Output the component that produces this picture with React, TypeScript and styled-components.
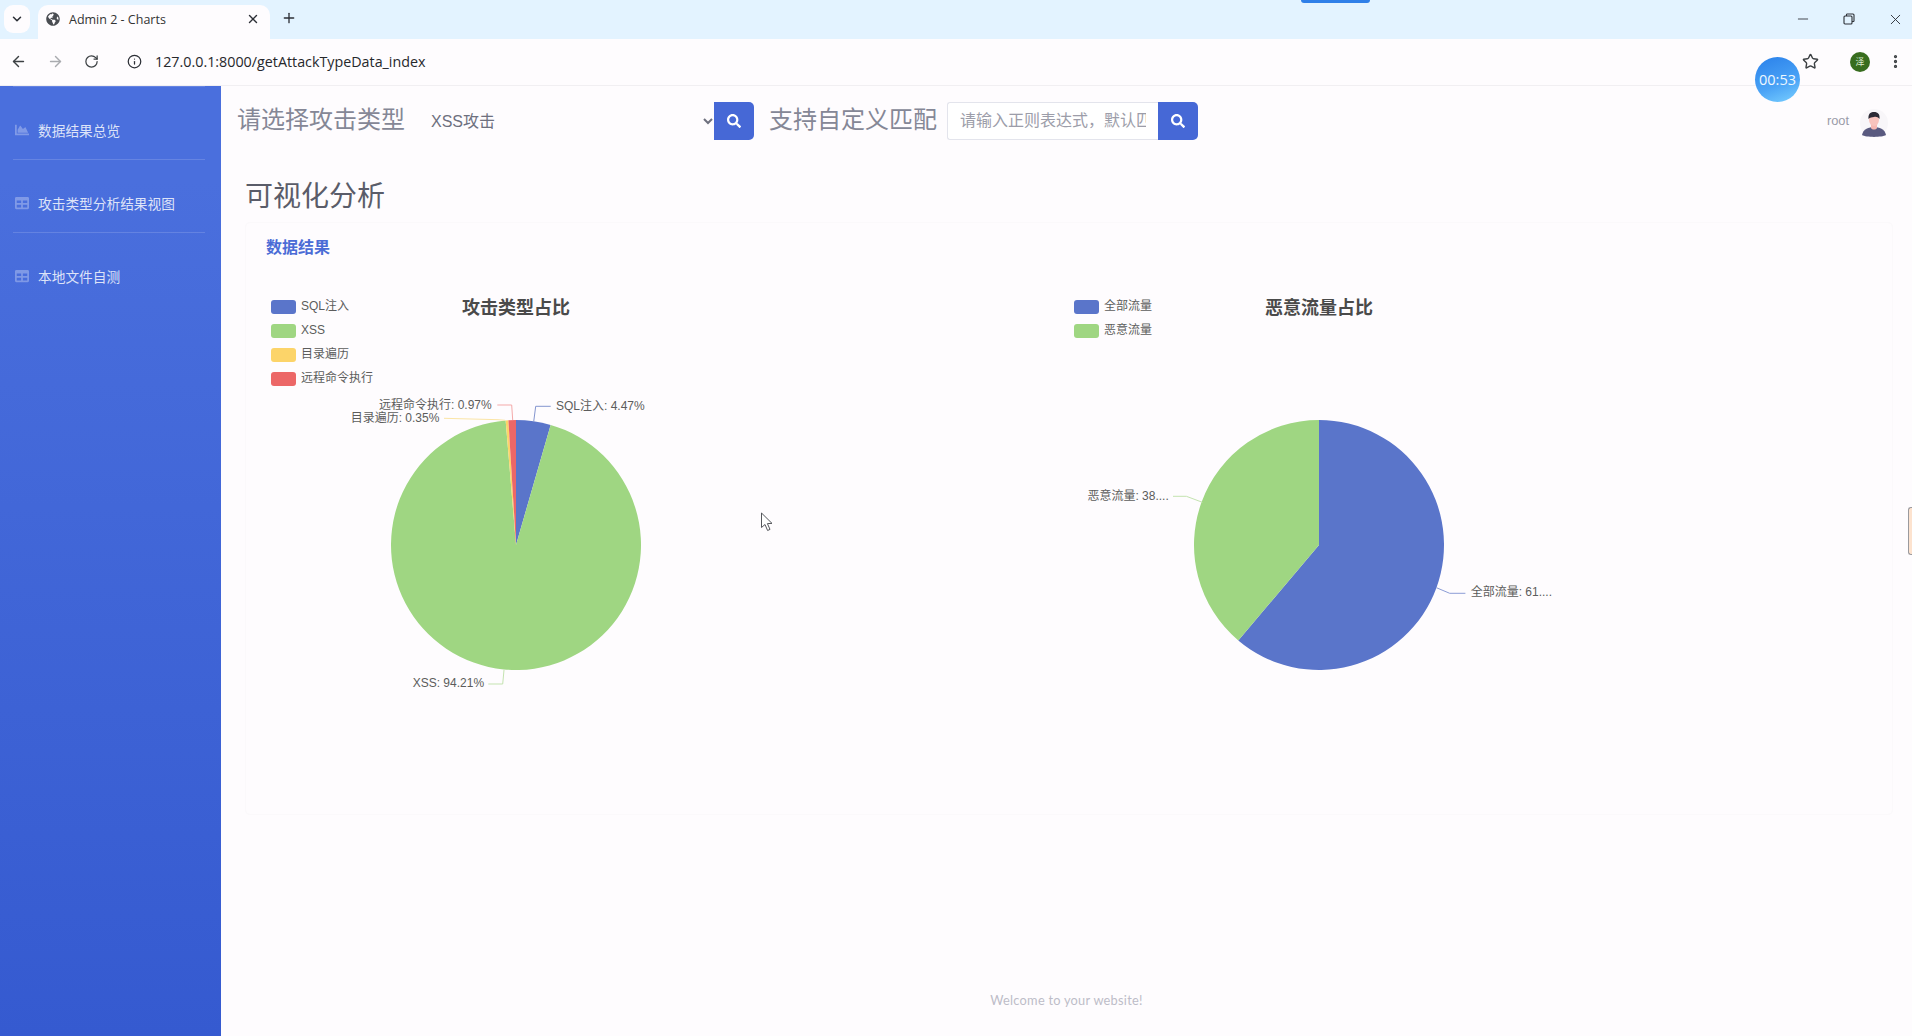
import React from 'react';
import styled, { createGlobalStyle } from 'styled-components';
import { ArrowLeft, ArrowRight, ChevronDown, EllipsisVertical, Info, Minus, Plus, RotateCw, Star, X } from 'lucide-react';
import { FaChartArea, FaGlobeAmericas, FaSearch, FaTable } from 'react-icons/fa';

const UI_FONT = '"Liberation Sans", "Noto Sans CJK SC", sans-serif';
const CHROME_FONT = '"Open Sans", "Noto Sans CJK SC", sans-serif';
const PAGE_BG = '#fefcfe';

const GlobalStyle = createGlobalStyle`
  html, body {
    margin: 0;
    padding: 0;
    background: ${PAGE_BG};
    overflow: hidden;
  }
  * { box-sizing: border-box; }
`;

const Screen = styled.div`
  position: relative;
  width: 1912px;
  height: 1036px;
  display: flex;
  flex-direction: column;
  overflow: hidden;
  font-family: ${UI_FONT};
  background: ${PAGE_BG};
`;

/* browser chrome */
const TabStrip = styled.div`
  height: 39px;
  flex: none;
  display: flex;
  align-items: flex-end;
  background: #e3f3ff;
  padding-left: 4px;
  color: #2c2f36;
`;

const TabMenu = styled.div`
  width: 26px;
  height: 28px;
  margin-bottom: 6px;
  border-radius: 9px;
  background: ${PAGE_BG};
  display: flex;
  align-items: center;
  justify-content: center;
`;

const Tab = styled.div`
  width: 232px;
  height: 34px;
  margin-left: 8px;
  padding: 0 10px 6px 8px;
  border-radius: 10px 10px 0 0;
  background: ${PAGE_BG};
  display: flex;
  align-items: center;
  gap: 9px;
`;

const TabTitle = styled.span`
  flex: 1;
  font: 12.5px ${CHROME_FONT};
  color: #333;
`;

const NewTab = styled.div`
  margin: 0 0 13px 11px;
  display: flex;
`;

const WindowButtons = styled.div`
  margin-left: auto;
  align-self: flex-start;
  height: 38px;
  display: flex;
  align-items: center;
  gap: 32px;
  padding-right: 8px;
`;

const AddressBar = styled.div`
  height: 47px;
  flex: none;
  display: flex;
  align-items: center;
  background: ${PAGE_BG};
  border-bottom: 1px solid #f1eff2;
  padding: 0 8px 1px 10px;
  color: #3c4043;
`;

const NavIcons = styled.div`
  display: flex;
  align-items: center;
  gap: 20px;
`;

const Url = styled.div`
  display: flex;
  align-items: center;
  gap: 13px;
  margin-left: 28px;
  font: 14.3px ${CHROME_FONT};
  color: #26282c;
`;

const BarActions = styled.div`
  margin-left: auto;
  display: flex;
  align-items: center;
`;

const Profile = styled.div`
  width: 20px;
  height: 20px;
  margin: 0 17px 0 31px;
  border-radius: 50%;
  background: #386d1f;
  color: #dcebd2;
  font: 9px "Noto Sans CJK SC", sans-serif;
  display: flex;
  align-items: center;
  justify-content: center;
`;

/* page */
const Body = styled.div`
  flex: 1;
  min-height: 0;
  display: flex;
`;

const Sidebar = styled.nav`
  width: 221px;
  flex: none;
  background: linear-gradient(180deg, #4a6fdd 10%, #355ad0 100%);
`;

const NavItem = styled.a`
  height: 59px;
  padding-left: 15px;
  display: flex;
  align-items: center;
  gap: 9px;
  color: rgba(255, 255, 255, 0.82);
  font-size: 13.7px;
  svg { color: rgba(255, 255, 255, 0.3); flex: none; }
`;

const Divider = styled.hr`
  margin: 0 16px 13px 13px;
  border: 0;
  border-top: 1px solid rgba(255, 255, 255, 0.15);
`;

const Main = styled.main`
  flex: 1;
  min-width: 0;
  display: flex;
  flex-direction: column;
`;

const Topbar = styled.header`
  height: 68px;
  flex: none;
  padding: 16px 24px 0 16px;
  display: flex;
  align-items: flex-start;
`;

const SearchLabel = styled.span<{ $gap?: number }>`
  height: 38px;
  margin-left: ${p => p.$gap ?? 0}px;
  font-size: 24px;
  line-height: 36px;
  color: #858796;
  white-space: nowrap;
`;

const TypeSelect = styled.select`
  width: 302px;
  height: 38px;
  margin: 0 -2px 0 9px;
  padding: 0 0 0 13px;
  border: 0;
  background: transparent;
  color: #6e707e;
  font: 16px ${UI_FONT};
  outline: none;
`;

const RegexInput = styled.input`
  width: 211px;
  height: 38px;
  margin-left: 10px;
  padding: 6px 12px;
  border: 1px solid #e3e4ec;
  border-right: 0;
  border-radius: 3px 0 0 3px;
  background: #fff;
  font: 16px ${UI_FONT};
  &::placeholder { color: #9c9da9; opacity: 1; }
`;

const SearchButton = styled.button`
  position: relative;
  width: 40px;
  height: 38px;
  padding: 0;
  border: 0;
  border-radius: 0 5px 5px 0;
  background: #4668d6;
  color: #fff;
  display: flex;
  align-items: center;
  justify-content: center;
`;

const UserBox = styled.div`
  margin-left: auto;
  height: 36px;
  display: flex;
  align-items: center;
  gap: 11px;
  font-size: 12.8px;
  color: #9a9ba8;
  svg { margin-top: 6px; }
`;

const Content = styled.div`
  flex: 1;
  padding: 0 19px 0 24px;
`;

const Heading = styled.h1`
  margin: 26px 0 8px;
  font-size: 28px;
  font-weight: 400;
  line-height: 1.2;
  color: #5a5c69;
`;

const Card = styled.section`
  height: 593px;
  border: 1px solid #fbf9fb;
  border-radius: 5px;
  padding: 15px 20px 0;
`;

const CardTitle = styled.h6`
  margin: 0 0 38px;
  font-size: 16px;
  font-weight: 700;
  line-height: 19px;
  color: #4b6cd6;
`;

const ChartRow = styled.div`
  display: flex;
  gap: 303px;
`;

const ChartSvg = styled.svg`
  width: 500px;
  height: 500px;
  flex: none;
`;

const ChartTitle = styled.text`
  font: 700 18px ${UI_FONT};
  fill: #4a4a4a;
  text-anchor: middle;
  dominant-baseline: central;
`;

const ChartText = styled.text`
  font: 12px ${UI_FONT};
  fill: #5c5c5c;
  dominant-baseline: central;
`;

const Footer = styled.footer`
  height: 72px;
  flex: none;
  display: flex;
  align-items: center;
  justify-content: center;
  font: 12.8px Lato, sans-serif;
  letter-spacing: 0.25px;
  color: #bdbcc8;
`;

/* overlays from the screen recorder */
const RecorderPill = styled.div`
  position: absolute;
  left: 1301px;
  top: 0;
  width: 69px;
  height: 3px;
  border-radius: 0 0 4px 4px;
  background: #2f7fe8;
`;

const TimerBubble = styled.div`
  position: absolute;
  left: 1755px;
  top: 57px;
  width: 45px;
  height: 45px;
  border-radius: 50%;
  background: linear-gradient(160deg, #2f86ec 10%, #4aa3f6 60%, #7ad0ff 100%);
  color: #eef8ff;
  font: 14.5px ${CHROME_FONT};
  display: flex;
  align-items: center;
  justify-content: center;
`;

const EdgeHandle = styled.div`
  position: absolute;
  right: 0;
  top: 507px;
  width: 4px;
  height: 48px;
  border: 1px solid #9a9a9e;
  border-right: 0;
  border-radius: 3px 0 0 3px;
  background: #fde3cf;
`;

const Cursor = styled.svg`
  position: absolute;
  left: 760px;
  top: 512px;
`;

type Slice = { name: string; value: number; color: string; lineColor: string; label: string; textX: number; textY: number; line: string };

const attackSlices: Slice[] = [
  { name: 'SQL注入', value: 4.47, color: '#5a75ca', lineColor: '#8495cf', label: 'SQL注入: 4.47%', textX: 290, textY: 111, line: '267.7,126.7 269.7,111.3 284.7,111.3' },
  { name: 'XSS', value: 94.21, color: '#9fd682', lineColor: '#c4e3b0', label: 'XSS: 94.21%', textX: 146.7, textY: 388.3, line: '238,375 236.7,389 222.3,389' },
  { name: '目录遍历', value: 0.35, color: '#fcd469', lineColor: '#fbe5a6', label: '目录遍历: 0.35%', textX: 84.7, textY: 123.3, line: '239,125.3 232,124.7 178,123.3' },
  { name: '远程命令执行', value: 0.97, color: '#ec6767', lineColor: '#f4a9a9', label: '远程命令执行: 0.97%', textX: 113, textY: 110, line: '246.7,125 245.7,110 231.3,110' },
];

const trafficSlices: Slice[] = [
  { name: '全部流量', value: 61.17, color: '#5a75ca', lineColor: '#8c9dd6', label: '全部流量: 61....', textX: 401.7, textY: 297, line: '367.4,292.7 380.7,298.3 396.4,298.3' },
  { name: '恶意流量', value: 38.83, color: '#9fd682', lineColor: '#c4e3b0', label: '恶意流量: 38....', textX: 18.4, textY: 201, line: '104,201.3 117.4,201.3 133.4,207.3' },
];

const slicePath = (from: number, to: number) => {
  const r = 125;
  const point = (pct: number) => {
    const a = (pct / 100) * 2 * Math.PI;
    return `${250 + r * Math.sin(a)} ${250 - r * Math.cos(a)}`;
  };
  return `M250 250 L${point(from)} A${r} ${r} 0 ${to - from > 50 ? 1 : 0} 1 ${point(to)} Z`;
};

const PieChart: React.FC<{ title: string; slices: Slice[] }> = ({ title, slices }) => {
  let total = 0;
  return (
    <ChartSvg viewBox="0 0 500 500">
      <ChartTitle x={250} y={13}>{title}</ChartTitle>
      {slices.map((s, i) => (
        <g key={s.name}>
          <rect x={5} y={5 + i * 24} width={25} height={14} rx={3} fill={s.color} />
          <ChartText x={35} y={11 + i * 24}>{s.name}</ChartText>
        </g>
      ))}
      {slices.map(s => {
        const from = total;
        total += s.value;
        return <path key={s.name} d={slicePath(from, total)} fill={s.color} />;
      })}
      {slices.map(s => (
        <g key={s.name}>
          <polyline points={s.line} fill="none" stroke={s.lineColor} strokeWidth={1} />
          <ChartText x={s.textX} y={s.textY}>{s.label}</ChartText>
        </g>
      ))}
    </ChartSvg>
  );
};

const Avatar = () => (
  <svg width="28" height="28" viewBox="0 0 28 28">
    <circle cx="14" cy="14" r="14" fill="#f8f6f9" />
    <path d="M2 26 C3 20 9 18 14 18 C19 18 25 20 26 26 C22 28.5 6 28.5 2 26Z" fill="#5a5a80" />
    <path d="M11 14 h6 v5 c-1 2 -5 2 -6 0Z" fill="#f7b7b1" />
    <ellipse cx="14" cy="11" rx="5" ry="6" fill="#f9c3bd" />
    <path d="M8.5 10 C8 4 11 3 14 3 C18 3 20 5 19.5 10 C18 8 16 7.5 14 8 C12 8.5 10 8 8.5 10Z" fill="#2c2a35" />
  </svg>
);

const RestoreIcon = () => (
  <svg width="12" height="12" viewBox="0 0 12 12" fill="none" stroke="#2c2f36" strokeWidth="1.1">
    <rect x="1" y="3" width="8" height="8" rx="1" />
    <path d="M3.5 3V1.6C3.5 1.2 3.8 1 4.2 1H10C10.6 1 11 1.4 11 2V7.8C11 8.2 10.8 8.5 10.4 8.5H9" />
  </svg>
);

export default function App() {
  return (
    <Screen>
      <GlobalStyle />
      <TabStrip>
        <TabMenu><ChevronDown size={14} strokeWidth={2.6} /></TabMenu>
        <Tab>
          <FaGlobeAmericas size={14} color="#4a4d52" />
          <TabTitle>Admin 2 - Charts</TabTitle>
          <X size={14} strokeWidth={2.4} />
        </Tab>
        <NewTab><Plus size={16} strokeWidth={2} /></NewTab>
        <WindowButtons>
          <Minus size={16} strokeWidth={1.3} />
          <RestoreIcon />
          <X size={17} strokeWidth={1.3} />
        </WindowButtons>
      </TabStrip>
      <AddressBar>
        <NavIcons>
          <ArrowLeft size={17} strokeWidth={2} />
          <ArrowRight size={17} strokeWidth={2} color="#a9abaf" />
          <RotateCw size={15} strokeWidth={2} />
        </NavIcons>
        <Url>
          <Info size={15} strokeWidth={2} color="#2c2f36" />
          127.0.0.1:8000/getAttackTypeData_index
        </Url>
        <BarActions>
          <Star size={17} strokeWidth={2} />
          <Profile>泽</Profile>
          <EllipsisVertical size={17} strokeWidth={2.6} />
        </BarActions>
      </AddressBar>
      <Body>
        <Sidebar>
          <Divider />
          <NavItem><FaChartArea size={14} />数据结果总览</NavItem>
          <Divider />
          <NavItem><FaTable size={14} />攻击类型分析结果视图</NavItem>
          <Divider />
          <NavItem><FaTable size={14} />本地文件自测</NavItem>
        </Sidebar>
        <Main>
          <Topbar>
            <SearchLabel>请选择攻击类型</SearchLabel>
            <TypeSelect defaultValue="xss">
              <option value="xss">XSS攻击</option>
              <option value="sql">SQL注入</option>
            </TypeSelect>
            <SearchButton><FaSearch size={14} /></SearchButton>
            <SearchLabel $gap={15}>支持自定义匹配</SearchLabel>
            <RegexInput placeholder="请输入正则表达式，默认匹配全部" />
            <SearchButton><FaSearch size={14} /></SearchButton>
            <UserBox>root<Avatar /></UserBox>
          </Topbar>
          <Content>
            <Heading>可视化分析</Heading>
            <Card>
              <CardTitle>数据结果</CardTitle>
              <ChartRow>
                <PieChart title="攻击类型占比" slices={attackSlices} />
                <PieChart title="恶意流量占比" slices={trafficSlices} />
              </ChartRow>
            </Card>
          </Content>
          <Footer>Welcome to your website!</Footer>
        </Main>
      </Body>
      <RecorderPill />
      <TimerBubble>00:53</TimerBubble>
      <EdgeHandle />
      <Cursor width="14" height="20" viewBox="0 0 14 20">
        <path d="M1.5 1 V15.5 L5 12.5 L7.6 18.5 L10 17.4 L7.4 11.6 L12 11.4 Z" fill="#fff" stroke="#55575c" strokeWidth="1" strokeLinejoin="round" />
      </Cursor>
    </Screen>
  );
}
